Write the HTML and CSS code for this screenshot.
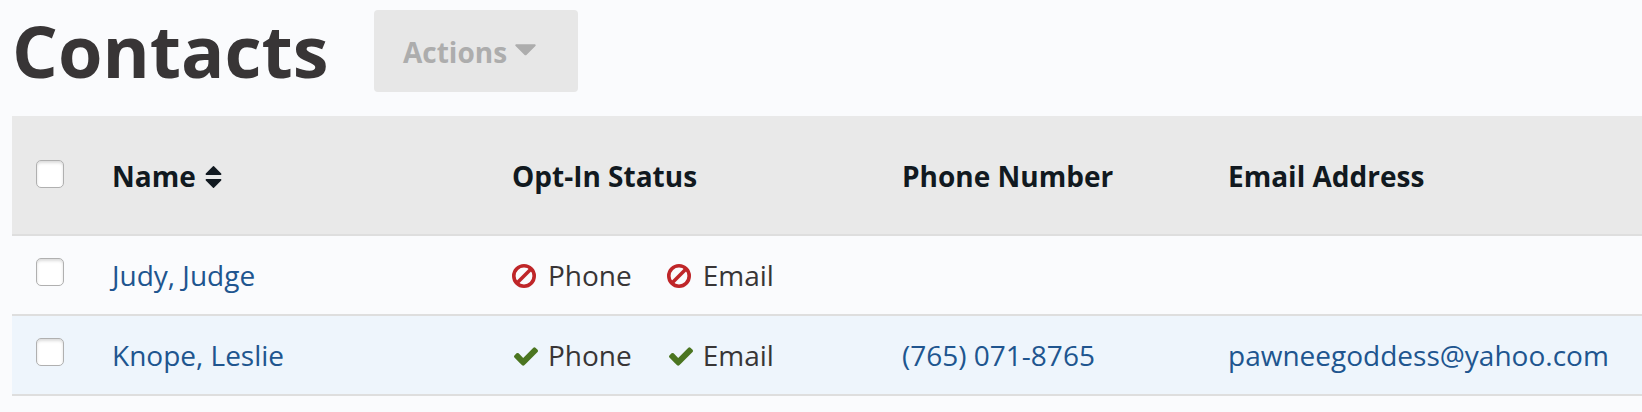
FILE: index.html
```html
<!DOCTYPE html>
<html lang="en">
<head>
    <meta charset="UTF-8">
    <meta name="viewport" content="width=device-width, initial-scale=1.0">
    <title>Contacts</title>
    <link rel="stylesheet" href="styles.css">
</head>
<body>

    <!-- Shared icons -->
    <svg class="icon-defs" aria-hidden="true">
        <symbol id="icon-ban" viewBox="0 0 24 24">
            <circle cx="12" cy="12" r="10.2" fill="none" stroke="currentColor" stroke-width="3.6"/>
            <path d="M5 19L19 5" stroke="currentColor" stroke-width="3.5"/>
        </symbol>
        <symbol id="icon-check" viewBox="121 334 1550 1188">
            <path d="M1671 566q0 40-28 68l-724 724-136 136q-28 28-68 28t-68-28l-136-136-362-362q-28-28-28-68t28-68l136-136q28-28 68-28t68 28l294 295 656-657q28-28 68-28t68 28l136 136q28 28 28 68z" fill="currentColor"/>
        </symbol>
    </svg>

    <div class="page-header">
        <h1>Contacts</h1>
        <button class="actions-btn" disabled>
            Actions
            <svg class="caret" viewBox="0 0 21 12"><path d="M1.2 0.3h18.6a0.9 0.9 0 0 1 0.6 1.6l-9 9a1.3 1.3 0 0 1-1.8 0l-9-9a0.9 0.9 0 0 1 0.6-1.6z" fill="currentColor"/></svg>
        </button>
    </div>

    <table class="contacts">
        <thead>
            <tr>
                <th class="col-check"><input type="checkbox" aria-label="Select all"></th>
                <th class="col-name">Name<svg class="sort" viewBox="0 0 17 22"><path d="M8 0.3a0.8 0.8 0 0 1 1 0L16.2 7.5q0.6 1.2-0.6 1.4H1.4q-1.2-0.2-0.6-1.4zM1.4 13.1h14.2q1.2 0.2 0.6 1.4L9 21.7a0.8 0.8 0 0 1-1 0L0.8 14.5q-0.6-1.2 0.6-1.4z" fill="currentColor"/></svg></th>
                <th class="col-status">Opt-In Status</th>
                <th class="col-phone">Phone Number</th>
                <th>Email Address</th>
            </tr>
        </thead>
        <tbody>
            <tr>
                <td class="col-check"><input type="checkbox" aria-label="Select Judy, Judge"></td>
                <td><a href="#">Judy, Judge</a></td>
                <td>
                    <div class="opt-in">
                        <span class="opt out"><svg><use href="#icon-ban"/></svg>Phone</span>
                        <span class="opt out"><svg><use href="#icon-ban"/></svg>Email</span>
                    </div>
                </td>
                <td></td>
                <td></td>
            </tr>
            <tr class="highlight">
                <td class="col-check"><input type="checkbox" aria-label="Select Knope, Leslie"></td>
                <td><a href="#">Knope, Leslie</a></td>
                <td>
                    <div class="opt-in">
                        <span class="opt in"><svg><use href="#icon-check"/></svg>Phone</span>
                        <span class="opt in"><svg><use href="#icon-check"/></svg>Email</span>
                    </div>
                </td>
                <td><a href="#">(765) 071-8765</a></td>
                <td><a href="#">pawneegoddess@yahoo.com</a></td>
            </tr>
        </tbody>
    </table>

</body>
</html>
```
FILE: styles.css
```css
* {
    box-sizing: border-box;
}

body {
    margin: 0;
    padding: 10px 0 0 12px;
    background-color: #fafbfd;
    color: #383536;
    font-family: "Open Sans", sans-serif;
    font-size: 28px;
    line-height: 38px;
    overflow: hidden;
}

.icon-defs {
    display: none;
}

.page-header {
    display: flex;
    height: 106px;
    align-items: flex-start;
}

h1 {
    width: 362px;
    margin: 0;
    font-size: 72px;
    font-weight: 700;
    line-height: 80px;
    color: #383536;
}

.actions-btn {
    display: flex;
    align-items: center;
    gap: 8px;
    width: 204px;
    height: 82px;
    padding: 2px 28px 0 29px;
    border: none;
    border-radius: 4px;
    background-color: #e7e7e7;
    color: #adadad;
    font: 700 28px/38px "Open Sans", sans-serif;
}

.caret {
    width: 21px;
    height: 12px;
    margin-bottom: 5px;
}

.contacts {
    width: 1630px;
    border-collapse: separate;
    border-spacing: 0;
    table-layout: fixed;
}

th, td {
    height: 80px;
    padding: 0;
    border-bottom: 2px solid #dedede;
    text-align: left;
    vertical-align: middle;
    white-space: nowrap;
}

th {
    height: 120px;
    padding-top: 2px;
    background-color: #e9e9e9;
    color: #111920;
    font-weight: 700;
}

.highlight td {
    background-color: #eef5fc;
}

.col-check {
    width: 100px;
    padding-left: 24px;
}

.col-name {
    width: 400px;
}

.col-status {
    width: 390px;
}

.col-phone {
    width: 326px;
}

.contacts input {
    display: block;
    appearance: none;
    width: 28px;
    height: 28px;
    margin: 0 0 6px;
    border: 1px solid #b0b0b0;
    border-radius: 5px;
    background-color: #fff;
    box-shadow: inset 0 2px 3px rgba(0, 0, 0, 0.14);
}

th.col-check input {
    margin-bottom: 4px;
}

.sort {
    width: 17px;
    height: 22px;
    margin-left: 9px;
    vertical-align: -1px;
}

.contacts a {
    color: #20558f;
    text-decoration: none;
}

.opt-in {
    display: flex;
    gap: 35px;
}

.opt {
    display: flex;
    align-items: center;
}

.opt svg {
    width: 24px;
    height: 24px;
    margin: 2px 12px 0 0;
}

.out svg {
    color: #bf2629;
}

.in svg {
    height: 19px;
    margin: 2px 10px 0 2px;
    color: #4b7520;
}
```
